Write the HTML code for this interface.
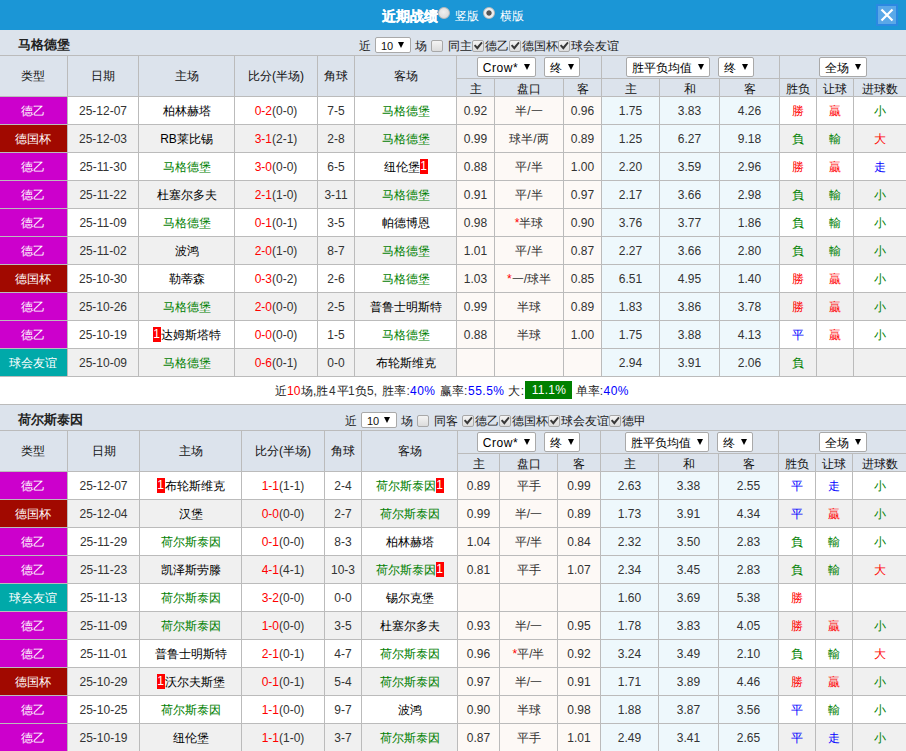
<!DOCTYPE html>
<html><head><meta charset="utf-8"><title>近期战绩</title>
<style>
html,body{margin:0;padding:0;}
body{width:906px;height:751px;overflow:hidden;position:relative;background:#fff;font-family:"Liberation Sans",sans-serif;font-size:12px;color:#1a1a1a;}
.c{position:absolute;box-sizing:border-box;display:flex;align-items:center;justify-content:center;white-space:nowrap;line-height:14px;}
.h{color:#111;}
.ty{color:#fff;padding-right:1.5px;}
.d{color:#333;}
.t{position:absolute;white-space:nowrap;line-height:14px;}
.rc{display:inline-block;background:#f00;color:#fff;font-weight:normal;width:8px;height:15px;line-height:15px;text-align:center;font-size:12px;}
.cb{position:absolute;width:10px;height:10px;border:1px solid #a8a8a8;border-radius:2px;background:linear-gradient(#f4f4f4,#dcdcdc);}
.cb svg{position:absolute;left:-1px;top:-1px;}
.sel{position:absolute;box-sizing:border-box;padding-top:2px;border:1px solid #a9a9a9;border-radius:2px;background:#fff;color:#000;display:flex;align-items:center;justify-content:center;white-space:nowrap;}
.ar{display:inline-block;width:0;height:0;border-left:3px solid transparent;border-right:3px solid transparent;border-top:6px solid #000;margin-left:6px;margin-top:-2px;}
</style></head><body>

<div style="position:absolute;left:0;top:0;width:906px;height:30px;background:#1b96d6"></div>
<div class="t" style="left:382px;top:7.5px;font-weight:bold;font-size:14px;color:#fff;line-height:16px;-webkit-text-stroke:0.3px #fff">近期战绩</div>
<div class="radio" style="position:absolute;left:438px;top:7px;width:10px;height:10px;border-radius:50%;border:1px solid #bbb;background:radial-gradient(circle at 45% 40%,#f0f0f0,#d4d4d4)"></div>
<div class="t" style="left:455px;top:9px;color:#fff;line-height:14px">竖版</div>
<div class="radio" style="position:absolute;left:483px;top:7px;width:10px;height:10px;border-radius:50%;border:1px solid #bbb;background:radial-gradient(circle,#555 0,#555 2.3px,#ccc 2.8px,#eee 3.6px,#f2f2f2 6px)"></div>
<div class="t" style="left:500px;top:9px;color:#fff;line-height:14px">横版</div>
<div style="position:absolute;left:876px;top:4px;width:18px;height:18px;border:2px solid #2b88e2;background:#5aa8e8"></div>
<svg style="position:absolute;left:876px;top:4px" width="22" height="22" viewBox="0 0 22 22"><path d="M5.5 5.5 L16.5 16.5 M16.5 5.5 L5.5 16.5" stroke="#fff" stroke-width="2.2"/></svg>
<div style="position:absolute;left:0;top:30px;width:906px;height:25px;background:#dce3ec"></div>
<div style="position:absolute;left:0;top:55px;width:906px;height:1px;background:#bbbbbb"></div>
<div class="t" style="left:18px;top:37px;font-weight:bold;font-size:13px;color:#222;line-height:15px">马格德堡</div>
<div class="t" style="left:359px;top:39px;line-height:14px">近</div>
<div class="sel" style="left:375px;top:37px;width:36px;height:16px;justify-content:flex-start;padding-left:5px;padding-top:2px;font-size:11px;color:#111">10<i class="ar" style="margin-left:5px;margin-top:-2px"></i></div>
<div class="t" style="left:415px;top:39px;">场</div>
<div class="cb" style="left:431px;top:40px"></div>
<div class="t" style="left:448px;top:39px;">同主</div>
<div class="cb" style="left:472px;top:40px"><svg width="12" height="12" viewBox="0 0 12 12"><path d="M1.9 5.7 L3.3 4.5 L5.2 6.5 L9.3 1.7 L10.7 2.9 L5.4 9.7 Z" fill="#383838"/></svg></div>
<div class="t" style="left:485px;top:39px;">德乙</div>
<div class="cb" style="left:509px;top:40px"><svg width="12" height="12" viewBox="0 0 12 12"><path d="M1.9 5.7 L3.3 4.5 L5.2 6.5 L9.3 1.7 L10.7 2.9 L5.4 9.7 Z" fill="#383838"/></svg></div>
<div class="t" style="left:522px;top:39px;">德国杯</div>
<div class="cb" style="left:558px;top:40px"><svg width="12" height="12" viewBox="0 0 12 12"><path d="M1.9 5.7 L3.3 4.5 L5.2 6.5 L9.3 1.7 L10.7 2.9 L5.4 9.7 Z" fill="#383838"/></svg></div>
<div class="t" style="left:571px;top:39px;">球会友谊</div>
<div class="c h" style="left:0px;top:56px;width:68px;height:41px;background:#dce3ec;border-right:1px solid #bbbbbb;border-bottom:1px solid #bbbbbb;padding-right:1.5px;">类型</div>
<div class="c h" style="left:68px;top:56px;width:71px;height:41px;background:#dce3ec;border-right:1px solid #bbbbbb;border-bottom:1px solid #bbbbbb;">日期</div>
<div class="c h" style="left:139px;top:56px;width:96px;height:41px;background:#dce3ec;border-right:1px solid #bbbbbb;border-bottom:1px solid #bbbbbb;">主场</div>
<div class="c h" style="left:235px;top:56px;width:83px;height:41px;background:#dce3ec;border-right:1px solid #bbbbbb;border-bottom:1px solid #bbbbbb;">比分(半场)</div>
<div class="c h" style="left:318px;top:56px;width:37px;height:41px;background:#dce3ec;border-right:1px solid #bbbbbb;border-bottom:1px solid #bbbbbb;">角球</div>
<div class="c h" style="left:355px;top:56px;width:102px;height:41px;background:#dce3ec;border-right:1px solid #bbbbbb;border-bottom:1px solid #bbbbbb;">客场</div>
<div class="c h" style="left:457px;top:56px;width:145px;height:23px;background:#dce3ec;border-right:1px solid #bbbbbb;border-bottom:1px solid #bbbbbb;"></div>
<div class="c h" style="left:602px;top:56px;width:178px;height:23px;background:#dce3ec;border-right:1px solid #bbbbbb;border-bottom:1px solid #bbbbbb;"></div>
<div class="c h" style="left:780px;top:56px;width:126px;height:23px;background:#dce3ec;border-bottom:1px solid #bbbbbb;"></div>
<div class="c h" style="left:457px;top:79px;width:38px;height:18px;background:#dce3ec;border-right:1px solid #bbbbbb;border-bottom:1px solid #bbbbbb;padding-top:2px;">主</div>
<div class="c h" style="left:495px;top:79px;width:69px;height:18px;background:#dce3ec;border-right:1px solid #bbbbbb;border-bottom:1px solid #bbbbbb;padding-top:2px;">盘口</div>
<div class="c h" style="left:564px;top:79px;width:38px;height:18px;background:#dce3ec;border-right:1px solid #bbbbbb;border-bottom:1px solid #bbbbbb;padding-top:2px;">客</div>
<div class="c h" style="left:602px;top:79px;width:58px;height:18px;background:#dce3ec;border-right:1px solid #bbbbbb;border-bottom:1px solid #bbbbbb;padding-top:2px;">主</div>
<div class="c h" style="left:660px;top:79px;width:60px;height:18px;background:#dce3ec;border-right:1px solid #bbbbbb;border-bottom:1px solid #bbbbbb;padding-top:2px;">和</div>
<div class="c h" style="left:720px;top:79px;width:60px;height:18px;background:#dce3ec;border-right:1px solid #bbbbbb;border-bottom:1px solid #bbbbbb;padding-top:2px;">客</div>
<div class="c h" style="left:780px;top:79px;width:37px;height:18px;background:#dce3ec;border-right:1px solid #bbbbbb;border-bottom:1px solid #bbbbbb;padding-top:2px;">胜负</div>
<div class="c h" style="left:817px;top:79px;width:37px;height:18px;background:#dce3ec;border-right:1px solid #bbbbbb;border-bottom:1px solid #bbbbbb;padding-top:2px;">让球</div>
<div class="c h" style="left:854px;top:79px;width:52px;height:18px;background:#dce3ec;border-bottom:1px solid #bbbbbb;padding-top:2px;">进球数</div>
<div class="sel" style="left:477px;top:57px;width:59px;height:20px"><span style="letter-spacing:0.6px">Crow*</span><i class="ar"></i></div>
<div class="sel" style="left:544px;top:57px;width:36px;height:20px">终<i class="ar"></i></div>
<div class="sel" style="left:626px;top:57px;width:84px;height:20px">胜平负均值<i class="ar"></i></div>
<div class="sel" style="left:718px;top:57px;width:36px;height:20px">终<i class="ar"></i></div>
<div class="sel" style="left:819px;top:57px;width:48px;height:20px">全场<i class="ar"></i></div>
<div class="c ty" style="left:0px;top:97px;width:68px;height:28px;background:#cc00cc;border-right:1px solid #bbbbbb;border-bottom:1px solid #bbbbbb;">德乙</div>
<div class="c d" style="left:68px;top:97px;width:71px;height:28px;background:#ffffff;border-right:1px solid #bbbbbb;border-bottom:1px solid #bbbbbb;">25-12-07</div>
<div class="c" style="left:139px;top:97px;width:96px;height:28px;background:#ffffff;border-right:1px solid #bbbbbb;border-bottom:1px solid #bbbbbb;"><span style="color:#000">柏林赫塔</span></div>
<div class="c d" style="left:235px;top:97px;width:83px;height:28px;background:#ffffff;border-right:1px solid #bbbbbb;border-bottom:1px solid #bbbbbb;"><span style="color:#ff0000">0-2</span>(0-0)</div>
<div class="c d" style="left:318px;top:97px;width:37px;height:28px;background:#ffffff;border-right:1px solid #bbbbbb;border-bottom:1px solid #bbbbbb;">7-5</div>
<div class="c" style="left:355px;top:97px;width:102px;height:28px;background:#ffffff;border-right:1px solid #bbbbbb;border-bottom:1px solid #bbbbbb;"><span style="color:#008000">马格德堡</span></div>
<div class="c d" style="left:457px;top:97px;width:38px;height:28px;background:#fdf9f6;border-right:1px solid #bbbbbb;border-bottom:1px solid #bbbbbb;">0.92</div>
<div class="c d" style="left:495px;top:97px;width:69px;height:28px;background:#fdf9f6;border-right:1px solid #bbbbbb;border-bottom:1px solid #bbbbbb;">半/一</div>
<div class="c d" style="left:564px;top:97px;width:38px;height:28px;background:#fdf9f6;border-right:1px solid #bbbbbb;border-bottom:1px solid #bbbbbb;">0.96</div>
<div class="c d" style="left:602px;top:97px;width:58px;height:28px;background:#eef8fc;border-right:1px solid #bbbbbb;border-bottom:1px solid #bbbbbb;">1.75</div>
<div class="c d" style="left:660px;top:97px;width:60px;height:28px;background:#eef8fc;border-right:1px solid #bbbbbb;border-bottom:1px solid #bbbbbb;">3.83</div>
<div class="c d" style="left:720px;top:97px;width:60px;height:28px;background:#eef8fc;border-right:1px solid #bbbbbb;border-bottom:1px solid #bbbbbb;">4.26</div>
<div class="c" style="left:780px;top:97px;width:37px;height:28px;background:#ffffff;border-right:1px solid #bbbbbb;border-bottom:1px solid #bbbbbb;"><span style="color:#ff0000">勝</span></div>
<div class="c" style="left:817px;top:97px;width:37px;height:28px;background:#ffffff;border-right:1px solid #bbbbbb;border-bottom:1px solid #bbbbbb;"><span style="color:#ff0000">贏</span></div>
<div class="c" style="left:854px;top:97px;width:52px;height:28px;background:#ffffff;border-bottom:1px solid #bbbbbb;"><span style="color:#008000">小</span></div>
<div class="c ty" style="left:0px;top:125px;width:68px;height:28px;background:#a10900;border-right:1px solid #bbbbbb;border-bottom:1px solid #bbbbbb;">德国杯</div>
<div class="c d" style="left:68px;top:125px;width:71px;height:28px;background:#f0f0f0;border-right:1px solid #bbbbbb;border-bottom:1px solid #bbbbbb;">25-12-03</div>
<div class="c" style="left:139px;top:125px;width:96px;height:28px;background:#f0f0f0;border-right:1px solid #bbbbbb;border-bottom:1px solid #bbbbbb;"><span style="color:#000">RB莱比锡</span></div>
<div class="c d" style="left:235px;top:125px;width:83px;height:28px;background:#f0f0f0;border-right:1px solid #bbbbbb;border-bottom:1px solid #bbbbbb;"><span style="color:#ff0000">3-1</span>(2-1)</div>
<div class="c d" style="left:318px;top:125px;width:37px;height:28px;background:#f0f0f0;border-right:1px solid #bbbbbb;border-bottom:1px solid #bbbbbb;">2-8</div>
<div class="c" style="left:355px;top:125px;width:102px;height:28px;background:#f0f0f0;border-right:1px solid #bbbbbb;border-bottom:1px solid #bbbbbb;"><span style="color:#008000">马格德堡</span></div>
<div class="c d" style="left:457px;top:125px;width:38px;height:28px;background:#fdf9f6;border-right:1px solid #bbbbbb;border-bottom:1px solid #bbbbbb;">0.99</div>
<div class="c d" style="left:495px;top:125px;width:69px;height:28px;background:#fdf9f6;border-right:1px solid #bbbbbb;border-bottom:1px solid #bbbbbb;">球半/两</div>
<div class="c d" style="left:564px;top:125px;width:38px;height:28px;background:#fdf9f6;border-right:1px solid #bbbbbb;border-bottom:1px solid #bbbbbb;">0.89</div>
<div class="c d" style="left:602px;top:125px;width:58px;height:28px;background:#eef8fc;border-right:1px solid #bbbbbb;border-bottom:1px solid #bbbbbb;">1.25</div>
<div class="c d" style="left:660px;top:125px;width:60px;height:28px;background:#eef8fc;border-right:1px solid #bbbbbb;border-bottom:1px solid #bbbbbb;">6.27</div>
<div class="c d" style="left:720px;top:125px;width:60px;height:28px;background:#eef8fc;border-right:1px solid #bbbbbb;border-bottom:1px solid #bbbbbb;">9.18</div>
<div class="c" style="left:780px;top:125px;width:37px;height:28px;background:#f0f0f0;border-right:1px solid #bbbbbb;border-bottom:1px solid #bbbbbb;"><span style="color:#008000">負</span></div>
<div class="c" style="left:817px;top:125px;width:37px;height:28px;background:#f0f0f0;border-right:1px solid #bbbbbb;border-bottom:1px solid #bbbbbb;"><span style="color:#008000">輸</span></div>
<div class="c" style="left:854px;top:125px;width:52px;height:28px;background:#f0f0f0;border-bottom:1px solid #bbbbbb;"><span style="color:#ff0000">大</span></div>
<div class="c ty" style="left:0px;top:153px;width:68px;height:28px;background:#cc00cc;border-right:1px solid #bbbbbb;border-bottom:1px solid #bbbbbb;">德乙</div>
<div class="c d" style="left:68px;top:153px;width:71px;height:28px;background:#ffffff;border-right:1px solid #bbbbbb;border-bottom:1px solid #bbbbbb;">25-11-30</div>
<div class="c" style="left:139px;top:153px;width:96px;height:28px;background:#ffffff;border-right:1px solid #bbbbbb;border-bottom:1px solid #bbbbbb;"><span style="color:#008000">马格德堡</span></div>
<div class="c d" style="left:235px;top:153px;width:83px;height:28px;background:#ffffff;border-right:1px solid #bbbbbb;border-bottom:1px solid #bbbbbb;"><span style="color:#ff0000">3-0</span>(0-0)</div>
<div class="c d" style="left:318px;top:153px;width:37px;height:28px;background:#ffffff;border-right:1px solid #bbbbbb;border-bottom:1px solid #bbbbbb;">6-5</div>
<div class="c" style="left:355px;top:153px;width:102px;height:28px;background:#ffffff;border-right:1px solid #bbbbbb;border-bottom:1px solid #bbbbbb;"><span style="color:#000">纽伦堡</span><b class="rc">1</b></div>
<div class="c d" style="left:457px;top:153px;width:38px;height:28px;background:#fdf9f6;border-right:1px solid #bbbbbb;border-bottom:1px solid #bbbbbb;">0.88</div>
<div class="c d" style="left:495px;top:153px;width:69px;height:28px;background:#fdf9f6;border-right:1px solid #bbbbbb;border-bottom:1px solid #bbbbbb;">平/半</div>
<div class="c d" style="left:564px;top:153px;width:38px;height:28px;background:#fdf9f6;border-right:1px solid #bbbbbb;border-bottom:1px solid #bbbbbb;">1.00</div>
<div class="c d" style="left:602px;top:153px;width:58px;height:28px;background:#eef8fc;border-right:1px solid #bbbbbb;border-bottom:1px solid #bbbbbb;">2.20</div>
<div class="c d" style="left:660px;top:153px;width:60px;height:28px;background:#eef8fc;border-right:1px solid #bbbbbb;border-bottom:1px solid #bbbbbb;">3.59</div>
<div class="c d" style="left:720px;top:153px;width:60px;height:28px;background:#eef8fc;border-right:1px solid #bbbbbb;border-bottom:1px solid #bbbbbb;">2.96</div>
<div class="c" style="left:780px;top:153px;width:37px;height:28px;background:#ffffff;border-right:1px solid #bbbbbb;border-bottom:1px solid #bbbbbb;"><span style="color:#ff0000">勝</span></div>
<div class="c" style="left:817px;top:153px;width:37px;height:28px;background:#ffffff;border-right:1px solid #bbbbbb;border-bottom:1px solid #bbbbbb;"><span style="color:#ff0000">贏</span></div>
<div class="c" style="left:854px;top:153px;width:52px;height:28px;background:#ffffff;border-bottom:1px solid #bbbbbb;"><span style="color:#0000ff">走</span></div>
<div class="c ty" style="left:0px;top:181px;width:68px;height:28px;background:#cc00cc;border-right:1px solid #bbbbbb;border-bottom:1px solid #bbbbbb;">德乙</div>
<div class="c d" style="left:68px;top:181px;width:71px;height:28px;background:#f0f0f0;border-right:1px solid #bbbbbb;border-bottom:1px solid #bbbbbb;">25-11-22</div>
<div class="c" style="left:139px;top:181px;width:96px;height:28px;background:#f0f0f0;border-right:1px solid #bbbbbb;border-bottom:1px solid #bbbbbb;"><span style="color:#000">杜塞尔多夫</span></div>
<div class="c d" style="left:235px;top:181px;width:83px;height:28px;background:#f0f0f0;border-right:1px solid #bbbbbb;border-bottom:1px solid #bbbbbb;"><span style="color:#ff0000">2-1</span>(1-0)</div>
<div class="c d" style="left:318px;top:181px;width:37px;height:28px;background:#f0f0f0;border-right:1px solid #bbbbbb;border-bottom:1px solid #bbbbbb;">3-11</div>
<div class="c" style="left:355px;top:181px;width:102px;height:28px;background:#f0f0f0;border-right:1px solid #bbbbbb;border-bottom:1px solid #bbbbbb;"><span style="color:#008000">马格德堡</span></div>
<div class="c d" style="left:457px;top:181px;width:38px;height:28px;background:#fdf9f6;border-right:1px solid #bbbbbb;border-bottom:1px solid #bbbbbb;">0.91</div>
<div class="c d" style="left:495px;top:181px;width:69px;height:28px;background:#fdf9f6;border-right:1px solid #bbbbbb;border-bottom:1px solid #bbbbbb;">平/半</div>
<div class="c d" style="left:564px;top:181px;width:38px;height:28px;background:#fdf9f6;border-right:1px solid #bbbbbb;border-bottom:1px solid #bbbbbb;">0.97</div>
<div class="c d" style="left:602px;top:181px;width:58px;height:28px;background:#eef8fc;border-right:1px solid #bbbbbb;border-bottom:1px solid #bbbbbb;">2.17</div>
<div class="c d" style="left:660px;top:181px;width:60px;height:28px;background:#eef8fc;border-right:1px solid #bbbbbb;border-bottom:1px solid #bbbbbb;">3.66</div>
<div class="c d" style="left:720px;top:181px;width:60px;height:28px;background:#eef8fc;border-right:1px solid #bbbbbb;border-bottom:1px solid #bbbbbb;">2.98</div>
<div class="c" style="left:780px;top:181px;width:37px;height:28px;background:#f0f0f0;border-right:1px solid #bbbbbb;border-bottom:1px solid #bbbbbb;"><span style="color:#008000">負</span></div>
<div class="c" style="left:817px;top:181px;width:37px;height:28px;background:#f0f0f0;border-right:1px solid #bbbbbb;border-bottom:1px solid #bbbbbb;"><span style="color:#008000">輸</span></div>
<div class="c" style="left:854px;top:181px;width:52px;height:28px;background:#f0f0f0;border-bottom:1px solid #bbbbbb;"><span style="color:#008000">小</span></div>
<div class="c ty" style="left:0px;top:209px;width:68px;height:28px;background:#cc00cc;border-right:1px solid #bbbbbb;border-bottom:1px solid #bbbbbb;">德乙</div>
<div class="c d" style="left:68px;top:209px;width:71px;height:28px;background:#ffffff;border-right:1px solid #bbbbbb;border-bottom:1px solid #bbbbbb;">25-11-09</div>
<div class="c" style="left:139px;top:209px;width:96px;height:28px;background:#ffffff;border-right:1px solid #bbbbbb;border-bottom:1px solid #bbbbbb;"><span style="color:#008000">马格德堡</span></div>
<div class="c d" style="left:235px;top:209px;width:83px;height:28px;background:#ffffff;border-right:1px solid #bbbbbb;border-bottom:1px solid #bbbbbb;"><span style="color:#ff0000">0-1</span>(0-1)</div>
<div class="c d" style="left:318px;top:209px;width:37px;height:28px;background:#ffffff;border-right:1px solid #bbbbbb;border-bottom:1px solid #bbbbbb;">3-5</div>
<div class="c" style="left:355px;top:209px;width:102px;height:28px;background:#ffffff;border-right:1px solid #bbbbbb;border-bottom:1px solid #bbbbbb;"><span style="color:#000">帕德博恩</span></div>
<div class="c d" style="left:457px;top:209px;width:38px;height:28px;background:#fdf9f6;border-right:1px solid #bbbbbb;border-bottom:1px solid #bbbbbb;">0.98</div>
<div class="c d" style="left:495px;top:209px;width:69px;height:28px;background:#fdf9f6;border-right:1px solid #bbbbbb;border-bottom:1px solid #bbbbbb;"><span style="color:#f00">*</span>半球</div>
<div class="c d" style="left:564px;top:209px;width:38px;height:28px;background:#fdf9f6;border-right:1px solid #bbbbbb;border-bottom:1px solid #bbbbbb;">0.90</div>
<div class="c d" style="left:602px;top:209px;width:58px;height:28px;background:#eef8fc;border-right:1px solid #bbbbbb;border-bottom:1px solid #bbbbbb;">3.76</div>
<div class="c d" style="left:660px;top:209px;width:60px;height:28px;background:#eef8fc;border-right:1px solid #bbbbbb;border-bottom:1px solid #bbbbbb;">3.77</div>
<div class="c d" style="left:720px;top:209px;width:60px;height:28px;background:#eef8fc;border-right:1px solid #bbbbbb;border-bottom:1px solid #bbbbbb;">1.86</div>
<div class="c" style="left:780px;top:209px;width:37px;height:28px;background:#ffffff;border-right:1px solid #bbbbbb;border-bottom:1px solid #bbbbbb;"><span style="color:#008000">負</span></div>
<div class="c" style="left:817px;top:209px;width:37px;height:28px;background:#ffffff;border-right:1px solid #bbbbbb;border-bottom:1px solid #bbbbbb;"><span style="color:#008000">輸</span></div>
<div class="c" style="left:854px;top:209px;width:52px;height:28px;background:#ffffff;border-bottom:1px solid #bbbbbb;"><span style="color:#008000">小</span></div>
<div class="c ty" style="left:0px;top:237px;width:68px;height:28px;background:#cc00cc;border-right:1px solid #bbbbbb;border-bottom:1px solid #bbbbbb;">德乙</div>
<div class="c d" style="left:68px;top:237px;width:71px;height:28px;background:#f0f0f0;border-right:1px solid #bbbbbb;border-bottom:1px solid #bbbbbb;">25-11-02</div>
<div class="c" style="left:139px;top:237px;width:96px;height:28px;background:#f0f0f0;border-right:1px solid #bbbbbb;border-bottom:1px solid #bbbbbb;"><span style="color:#000">波鸿</span></div>
<div class="c d" style="left:235px;top:237px;width:83px;height:28px;background:#f0f0f0;border-right:1px solid #bbbbbb;border-bottom:1px solid #bbbbbb;"><span style="color:#ff0000">2-0</span>(1-0)</div>
<div class="c d" style="left:318px;top:237px;width:37px;height:28px;background:#f0f0f0;border-right:1px solid #bbbbbb;border-bottom:1px solid #bbbbbb;">8-7</div>
<div class="c" style="left:355px;top:237px;width:102px;height:28px;background:#f0f0f0;border-right:1px solid #bbbbbb;border-bottom:1px solid #bbbbbb;"><span style="color:#008000">马格德堡</span></div>
<div class="c d" style="left:457px;top:237px;width:38px;height:28px;background:#fdf9f6;border-right:1px solid #bbbbbb;border-bottom:1px solid #bbbbbb;">1.01</div>
<div class="c d" style="left:495px;top:237px;width:69px;height:28px;background:#fdf9f6;border-right:1px solid #bbbbbb;border-bottom:1px solid #bbbbbb;">平/半</div>
<div class="c d" style="left:564px;top:237px;width:38px;height:28px;background:#fdf9f6;border-right:1px solid #bbbbbb;border-bottom:1px solid #bbbbbb;">0.87</div>
<div class="c d" style="left:602px;top:237px;width:58px;height:28px;background:#eef8fc;border-right:1px solid #bbbbbb;border-bottom:1px solid #bbbbbb;">2.27</div>
<div class="c d" style="left:660px;top:237px;width:60px;height:28px;background:#eef8fc;border-right:1px solid #bbbbbb;border-bottom:1px solid #bbbbbb;">3.66</div>
<div class="c d" style="left:720px;top:237px;width:60px;height:28px;background:#eef8fc;border-right:1px solid #bbbbbb;border-bottom:1px solid #bbbbbb;">2.80</div>
<div class="c" style="left:780px;top:237px;width:37px;height:28px;background:#f0f0f0;border-right:1px solid #bbbbbb;border-bottom:1px solid #bbbbbb;"><span style="color:#008000">負</span></div>
<div class="c" style="left:817px;top:237px;width:37px;height:28px;background:#f0f0f0;border-right:1px solid #bbbbbb;border-bottom:1px solid #bbbbbb;"><span style="color:#008000">輸</span></div>
<div class="c" style="left:854px;top:237px;width:52px;height:28px;background:#f0f0f0;border-bottom:1px solid #bbbbbb;"><span style="color:#008000">小</span></div>
<div class="c ty" style="left:0px;top:265px;width:68px;height:28px;background:#a10900;border-right:1px solid #bbbbbb;border-bottom:1px solid #bbbbbb;">德国杯</div>
<div class="c d" style="left:68px;top:265px;width:71px;height:28px;background:#ffffff;border-right:1px solid #bbbbbb;border-bottom:1px solid #bbbbbb;">25-10-30</div>
<div class="c" style="left:139px;top:265px;width:96px;height:28px;background:#ffffff;border-right:1px solid #bbbbbb;border-bottom:1px solid #bbbbbb;"><span style="color:#000">勒蒂森</span></div>
<div class="c d" style="left:235px;top:265px;width:83px;height:28px;background:#ffffff;border-right:1px solid #bbbbbb;border-bottom:1px solid #bbbbbb;"><span style="color:#ff0000">0-3</span>(0-2)</div>
<div class="c d" style="left:318px;top:265px;width:37px;height:28px;background:#ffffff;border-right:1px solid #bbbbbb;border-bottom:1px solid #bbbbbb;">2-6</div>
<div class="c" style="left:355px;top:265px;width:102px;height:28px;background:#ffffff;border-right:1px solid #bbbbbb;border-bottom:1px solid #bbbbbb;"><span style="color:#008000">马格德堡</span></div>
<div class="c d" style="left:457px;top:265px;width:38px;height:28px;background:#fdf9f6;border-right:1px solid #bbbbbb;border-bottom:1px solid #bbbbbb;">1.03</div>
<div class="c d" style="left:495px;top:265px;width:69px;height:28px;background:#fdf9f6;border-right:1px solid #bbbbbb;border-bottom:1px solid #bbbbbb;"><span style="color:#f00">*</span>一/球半</div>
<div class="c d" style="left:564px;top:265px;width:38px;height:28px;background:#fdf9f6;border-right:1px solid #bbbbbb;border-bottom:1px solid #bbbbbb;">0.85</div>
<div class="c d" style="left:602px;top:265px;width:58px;height:28px;background:#eef8fc;border-right:1px solid #bbbbbb;border-bottom:1px solid #bbbbbb;">6.51</div>
<div class="c d" style="left:660px;top:265px;width:60px;height:28px;background:#eef8fc;border-right:1px solid #bbbbbb;border-bottom:1px solid #bbbbbb;">4.95</div>
<div class="c d" style="left:720px;top:265px;width:60px;height:28px;background:#eef8fc;border-right:1px solid #bbbbbb;border-bottom:1px solid #bbbbbb;">1.40</div>
<div class="c" style="left:780px;top:265px;width:37px;height:28px;background:#ffffff;border-right:1px solid #bbbbbb;border-bottom:1px solid #bbbbbb;"><span style="color:#ff0000">勝</span></div>
<div class="c" style="left:817px;top:265px;width:37px;height:28px;background:#ffffff;border-right:1px solid #bbbbbb;border-bottom:1px solid #bbbbbb;"><span style="color:#ff0000">贏</span></div>
<div class="c" style="left:854px;top:265px;width:52px;height:28px;background:#ffffff;border-bottom:1px solid #bbbbbb;"><span style="color:#008000">小</span></div>
<div class="c ty" style="left:0px;top:293px;width:68px;height:28px;background:#cc00cc;border-right:1px solid #bbbbbb;border-bottom:1px solid #bbbbbb;">德乙</div>
<div class="c d" style="left:68px;top:293px;width:71px;height:28px;background:#f0f0f0;border-right:1px solid #bbbbbb;border-bottom:1px solid #bbbbbb;">25-10-26</div>
<div class="c" style="left:139px;top:293px;width:96px;height:28px;background:#f0f0f0;border-right:1px solid #bbbbbb;border-bottom:1px solid #bbbbbb;"><span style="color:#008000">马格德堡</span></div>
<div class="c d" style="left:235px;top:293px;width:83px;height:28px;background:#f0f0f0;border-right:1px solid #bbbbbb;border-bottom:1px solid #bbbbbb;"><span style="color:#ff0000">2-0</span>(0-0)</div>
<div class="c d" style="left:318px;top:293px;width:37px;height:28px;background:#f0f0f0;border-right:1px solid #bbbbbb;border-bottom:1px solid #bbbbbb;">2-5</div>
<div class="c" style="left:355px;top:293px;width:102px;height:28px;background:#f0f0f0;border-right:1px solid #bbbbbb;border-bottom:1px solid #bbbbbb;"><span style="color:#000">普鲁士明斯特</span></div>
<div class="c d" style="left:457px;top:293px;width:38px;height:28px;background:#fdf9f6;border-right:1px solid #bbbbbb;border-bottom:1px solid #bbbbbb;">0.99</div>
<div class="c d" style="left:495px;top:293px;width:69px;height:28px;background:#fdf9f6;border-right:1px solid #bbbbbb;border-bottom:1px solid #bbbbbb;">半球</div>
<div class="c d" style="left:564px;top:293px;width:38px;height:28px;background:#fdf9f6;border-right:1px solid #bbbbbb;border-bottom:1px solid #bbbbbb;">0.89</div>
<div class="c d" style="left:602px;top:293px;width:58px;height:28px;background:#eef8fc;border-right:1px solid #bbbbbb;border-bottom:1px solid #bbbbbb;">1.83</div>
<div class="c d" style="left:660px;top:293px;width:60px;height:28px;background:#eef8fc;border-right:1px solid #bbbbbb;border-bottom:1px solid #bbbbbb;">3.86</div>
<div class="c d" style="left:720px;top:293px;width:60px;height:28px;background:#eef8fc;border-right:1px solid #bbbbbb;border-bottom:1px solid #bbbbbb;">3.78</div>
<div class="c" style="left:780px;top:293px;width:37px;height:28px;background:#f0f0f0;border-right:1px solid #bbbbbb;border-bottom:1px solid #bbbbbb;"><span style="color:#ff0000">勝</span></div>
<div class="c" style="left:817px;top:293px;width:37px;height:28px;background:#f0f0f0;border-right:1px solid #bbbbbb;border-bottom:1px solid #bbbbbb;"><span style="color:#ff0000">贏</span></div>
<div class="c" style="left:854px;top:293px;width:52px;height:28px;background:#f0f0f0;border-bottom:1px solid #bbbbbb;"><span style="color:#008000">小</span></div>
<div class="c ty" style="left:0px;top:321px;width:68px;height:28px;background:#cc00cc;border-right:1px solid #bbbbbb;border-bottom:1px solid #bbbbbb;">德乙</div>
<div class="c d" style="left:68px;top:321px;width:71px;height:28px;background:#ffffff;border-right:1px solid #bbbbbb;border-bottom:1px solid #bbbbbb;">25-10-19</div>
<div class="c" style="left:139px;top:321px;width:96px;height:28px;background:#ffffff;border-right:1px solid #bbbbbb;border-bottom:1px solid #bbbbbb;"><b class="rc">1</b><span style="color:#000">达姆斯塔特</span></div>
<div class="c d" style="left:235px;top:321px;width:83px;height:28px;background:#ffffff;border-right:1px solid #bbbbbb;border-bottom:1px solid #bbbbbb;"><span style="color:#ff0000">0-0</span>(0-0)</div>
<div class="c d" style="left:318px;top:321px;width:37px;height:28px;background:#ffffff;border-right:1px solid #bbbbbb;border-bottom:1px solid #bbbbbb;">1-5</div>
<div class="c" style="left:355px;top:321px;width:102px;height:28px;background:#ffffff;border-right:1px solid #bbbbbb;border-bottom:1px solid #bbbbbb;"><span style="color:#008000">马格德堡</span></div>
<div class="c d" style="left:457px;top:321px;width:38px;height:28px;background:#fdf9f6;border-right:1px solid #bbbbbb;border-bottom:1px solid #bbbbbb;">0.88</div>
<div class="c d" style="left:495px;top:321px;width:69px;height:28px;background:#fdf9f6;border-right:1px solid #bbbbbb;border-bottom:1px solid #bbbbbb;">半球</div>
<div class="c d" style="left:564px;top:321px;width:38px;height:28px;background:#fdf9f6;border-right:1px solid #bbbbbb;border-bottom:1px solid #bbbbbb;">1.00</div>
<div class="c d" style="left:602px;top:321px;width:58px;height:28px;background:#eef8fc;border-right:1px solid #bbbbbb;border-bottom:1px solid #bbbbbb;">1.75</div>
<div class="c d" style="left:660px;top:321px;width:60px;height:28px;background:#eef8fc;border-right:1px solid #bbbbbb;border-bottom:1px solid #bbbbbb;">3.88</div>
<div class="c d" style="left:720px;top:321px;width:60px;height:28px;background:#eef8fc;border-right:1px solid #bbbbbb;border-bottom:1px solid #bbbbbb;">4.13</div>
<div class="c" style="left:780px;top:321px;width:37px;height:28px;background:#ffffff;border-right:1px solid #bbbbbb;border-bottom:1px solid #bbbbbb;"><span style="color:#0000ff">平</span></div>
<div class="c" style="left:817px;top:321px;width:37px;height:28px;background:#ffffff;border-right:1px solid #bbbbbb;border-bottom:1px solid #bbbbbb;"><span style="color:#ff0000">贏</span></div>
<div class="c" style="left:854px;top:321px;width:52px;height:28px;background:#ffffff;border-bottom:1px solid #bbbbbb;"><span style="color:#008000">小</span></div>
<div class="c ty" style="left:0px;top:349px;width:68px;height:28px;background:#00a9a9;border-right:1px solid #bbbbbb;border-bottom:1px solid #bbbbbb;">球会友谊</div>
<div class="c d" style="left:68px;top:349px;width:71px;height:28px;background:#f0f0f0;border-right:1px solid #bbbbbb;border-bottom:1px solid #bbbbbb;">25-10-09</div>
<div class="c" style="left:139px;top:349px;width:96px;height:28px;background:#f0f0f0;border-right:1px solid #bbbbbb;border-bottom:1px solid #bbbbbb;"><span style="color:#008000">马格德堡</span></div>
<div class="c d" style="left:235px;top:349px;width:83px;height:28px;background:#f0f0f0;border-right:1px solid #bbbbbb;border-bottom:1px solid #bbbbbb;"><span style="color:#ff0000">0-6</span>(0-1)</div>
<div class="c d" style="left:318px;top:349px;width:37px;height:28px;background:#f0f0f0;border-right:1px solid #bbbbbb;border-bottom:1px solid #bbbbbb;">0-0</div>
<div class="c" style="left:355px;top:349px;width:102px;height:28px;background:#f0f0f0;border-right:1px solid #bbbbbb;border-bottom:1px solid #bbbbbb;"><span style="color:#000">布轮斯维克</span></div>
<div class="c d" style="left:457px;top:349px;width:38px;height:28px;background:#fdf9f6;border-right:1px solid #bbbbbb;border-bottom:1px solid #bbbbbb;"></div>
<div class="c d" style="left:495px;top:349px;width:69px;height:28px;background:#fdf9f6;border-right:1px solid #bbbbbb;border-bottom:1px solid #bbbbbb;"></div>
<div class="c d" style="left:564px;top:349px;width:38px;height:28px;background:#fdf9f6;border-right:1px solid #bbbbbb;border-bottom:1px solid #bbbbbb;"></div>
<div class="c d" style="left:602px;top:349px;width:58px;height:28px;background:#eef8fc;border-right:1px solid #bbbbbb;border-bottom:1px solid #bbbbbb;">2.94</div>
<div class="c d" style="left:660px;top:349px;width:60px;height:28px;background:#eef8fc;border-right:1px solid #bbbbbb;border-bottom:1px solid #bbbbbb;">3.91</div>
<div class="c d" style="left:720px;top:349px;width:60px;height:28px;background:#eef8fc;border-right:1px solid #bbbbbb;border-bottom:1px solid #bbbbbb;">2.06</div>
<div class="c" style="left:780px;top:349px;width:37px;height:28px;background:#f0f0f0;border-right:1px solid #bbbbbb;border-bottom:1px solid #bbbbbb;"><span style="color:#008000">負</span></div>
<div class="c" style="left:817px;top:349px;width:37px;height:28px;background:#f0f0f0;border-right:1px solid #bbbbbb;border-bottom:1px solid #bbbbbb;"><span style="color:#333333"></span></div>
<div class="c" style="left:854px;top:349px;width:52px;height:28px;background:#f0f0f0;border-bottom:1px solid #bbbbbb;"><span style="color:#333333"></span></div>
<div style="position:absolute;left:0;top:377px;width:906px;height:27px;border-bottom:1px solid #bbb;box-sizing:border-box;height:28px;background:#fff"></div>
<div class="t" style="left:275px;top:383px;line-height:16px;color:#1a1a1a;">近</div>
<div class="t" style="left:287px;top:383px;line-height:16px;color:#f00;">10</div>
<div class="t" style="left:301px;top:383px;line-height:16px;color:#1a1a1a;">场,胜</div>
<div class="t" style="left:329px;top:383px;line-height:16px;color:#333;">4</div>
<div class="t" style="left:337px;top:383px;line-height:16px;color:#1a1a1a;">平</div>
<div class="t" style="left:348px;top:383px;line-height:16px;color:#333;">1</div>
<div class="t" style="left:355px;top:383px;line-height:16px;color:#1a1a1a;">负</div>
<div class="t" style="left:367px;top:383px;line-height:16px;color:#333;">5,</div>
<div class="t" style="left:382px;top:383px;line-height:16px;color:#1a1a1a;">胜率</div>
<div class="t" style="left:406.5px;top:383px;line-height:16px;color:#333;">:</div>
<div class="t" style="left:410px;top:383px;line-height:16px;color:#00f;letter-spacing:0.5px;">40%</div>
<div class="t" style="left:440px;top:383px;line-height:16px;color:#1a1a1a;">赢率</div>
<div class="t" style="left:464px;top:383px;line-height:16px;color:#333;">:</div>
<div class="t" style="left:468px;top:383px;line-height:16px;color:#00f;letter-spacing:0.5px;">55.5%</div>
<div class="t" style="left:507.6px;top:383px;line-height:16px;color:#1a1a1a;">大</div>
<div class="t" style="left:520.8px;top:383px;line-height:16px;color:#333;">:</div>
<div class="t" style="left:576px;top:383px;line-height:16px;color:#1a1a1a;">单率</div>
<div class="t" style="left:599.8px;top:383px;line-height:16px;color:#333;">:</div>
<div class="t" style="left:603.5px;top:383px;line-height:16px;color:#00f;letter-spacing:0.5px;">40%</div>
<div class="c" style="left:525px;top:381px;width:47px;height:18px;background:#008000;color:#fff;letter-spacing:0.3px;padding-left:1px">11.1%</div>
<div style="position:absolute;left:0;top:405px;width:906px;height:25px;background:#dce3ec"></div>
<div style="position:absolute;left:0;top:430px;width:906px;height:1px;background:#bbbbbb"></div>
<div class="t" style="left:18px;top:412px;font-weight:bold;font-size:13px;color:#222;line-height:15px">荷尔斯泰因</div>
<div class="t" style="left:345px;top:414px;">近</div>
<div class="sel" style="left:361px;top:412px;width:36px;height:16px;justify-content:flex-start;padding-left:5px;padding-top:2px;font-size:11px;color:#111">10<i class="ar" style="margin-left:5px;margin-top:-2px"></i></div>
<div class="t" style="left:401px;top:414px;">场</div>
<div class="cb" style="left:417px;top:415px"></div>
<div class="t" style="left:434px;top:414px;">同客</div>
<div class="cb" style="left:462px;top:415px"><svg width="12" height="12" viewBox="0 0 12 12"><path d="M1.9 5.7 L3.3 4.5 L5.2 6.5 L9.3 1.7 L10.7 2.9 L5.4 9.7 Z" fill="#383838"/></svg></div>
<div class="t" style="left:475px;top:414px;">德乙</div>
<div class="cb" style="left:499px;top:415px"><svg width="12" height="12" viewBox="0 0 12 12"><path d="M1.9 5.7 L3.3 4.5 L5.2 6.5 L9.3 1.7 L10.7 2.9 L5.4 9.7 Z" fill="#383838"/></svg></div>
<div class="t" style="left:512px;top:414px;">德国杯</div>
<div class="cb" style="left:548px;top:415px"><svg width="12" height="12" viewBox="0 0 12 12"><path d="M1.9 5.7 L3.3 4.5 L5.2 6.5 L9.3 1.7 L10.7 2.9 L5.4 9.7 Z" fill="#383838"/></svg></div>
<div class="t" style="left:561px;top:414px;">球会友谊</div>
<div class="cb" style="left:609px;top:415px"><svg width="12" height="12" viewBox="0 0 12 12"><path d="M1.9 5.7 L3.3 4.5 L5.2 6.5 L9.3 1.7 L10.7 2.9 L5.4 9.7 Z" fill="#383838"/></svg></div>
<div class="t" style="left:622px;top:414px;">德甲</div>
<div class="c h" style="left:0px;top:431px;width:68px;height:41px;background:#dce3ec;border-right:1px solid #bbbbbb;border-bottom:1px solid #bbbbbb;padding-right:1.5px;">类型</div>
<div class="c h" style="left:68px;top:431px;width:72px;height:41px;background:#dce3ec;border-right:1px solid #bbbbbb;border-bottom:1px solid #bbbbbb;">日期</div>
<div class="c h" style="left:140px;top:431px;width:102px;height:41px;background:#dce3ec;border-right:1px solid #bbbbbb;border-bottom:1px solid #bbbbbb;">主场</div>
<div class="c h" style="left:242px;top:431px;width:83px;height:41px;background:#dce3ec;border-right:1px solid #bbbbbb;border-bottom:1px solid #bbbbbb;">比分(半场)</div>
<div class="c h" style="left:325px;top:431px;width:37px;height:41px;background:#dce3ec;border-right:1px solid #bbbbbb;border-bottom:1px solid #bbbbbb;">角球</div>
<div class="c h" style="left:362px;top:431px;width:96px;height:41px;background:#dce3ec;border-right:1px solid #bbbbbb;border-bottom:1px solid #bbbbbb;">客场</div>
<div class="c h" style="left:458px;top:431px;width:143px;height:23px;background:#dce3ec;border-right:1px solid #bbbbbb;border-bottom:1px solid #bbbbbb;"></div>
<div class="c h" style="left:601px;top:431px;width:178px;height:23px;background:#dce3ec;border-right:1px solid #bbbbbb;border-bottom:1px solid #bbbbbb;"></div>
<div class="c h" style="left:779px;top:431px;width:127px;height:23px;background:#dce3ec;border-bottom:1px solid #bbbbbb;"></div>
<div class="c h" style="left:458px;top:454px;width:42px;height:18px;background:#dce3ec;border-right:1px solid #bbbbbb;border-bottom:1px solid #bbbbbb;padding-top:2px;">主</div>
<div class="c h" style="left:500px;top:454px;width:58px;height:18px;background:#dce3ec;border-right:1px solid #bbbbbb;border-bottom:1px solid #bbbbbb;padding-top:2px;">盘口</div>
<div class="c h" style="left:558px;top:454px;width:43px;height:18px;background:#dce3ec;border-right:1px solid #bbbbbb;border-bottom:1px solid #bbbbbb;padding-top:2px;">客</div>
<div class="c h" style="left:601px;top:454px;width:58px;height:18px;background:#dce3ec;border-right:1px solid #bbbbbb;border-bottom:1px solid #bbbbbb;padding-top:2px;">主</div>
<div class="c h" style="left:659px;top:454px;width:60px;height:18px;background:#dce3ec;border-right:1px solid #bbbbbb;border-bottom:1px solid #bbbbbb;padding-top:2px;">和</div>
<div class="c h" style="left:719px;top:454px;width:60px;height:18px;background:#dce3ec;border-right:1px solid #bbbbbb;border-bottom:1px solid #bbbbbb;padding-top:2px;">客</div>
<div class="c h" style="left:779px;top:454px;width:37px;height:18px;background:#dce3ec;border-right:1px solid #bbbbbb;border-bottom:1px solid #bbbbbb;padding-top:2px;">胜负</div>
<div class="c h" style="left:816px;top:454px;width:37px;height:18px;background:#dce3ec;border-right:1px solid #bbbbbb;border-bottom:1px solid #bbbbbb;padding-top:2px;">让球</div>
<div class="c h" style="left:853px;top:454px;width:53px;height:18px;background:#dce3ec;border-bottom:1px solid #bbbbbb;padding-top:2px;">进球数</div>
<div class="sel" style="left:477px;top:432px;width:59px;height:20px"><span style="letter-spacing:0.6px">Crow*</span><i class="ar"></i></div>
<div class="sel" style="left:544px;top:432px;width:36px;height:20px">终<i class="ar"></i></div>
<div class="sel" style="left:625px;top:432px;width:84px;height:20px">胜平负均值<i class="ar"></i></div>
<div class="sel" style="left:717px;top:432px;width:36px;height:20px">终<i class="ar"></i></div>
<div class="sel" style="left:819px;top:432px;width:48px;height:20px">全场<i class="ar"></i></div>
<div class="c ty" style="left:0px;top:472px;width:68px;height:28px;background:#cc00cc;border-right:1px solid #bbbbbb;border-bottom:1px solid #bbbbbb;">德乙</div>
<div class="c d" style="left:68px;top:472px;width:72px;height:28px;background:#ffffff;border-right:1px solid #bbbbbb;border-bottom:1px solid #bbbbbb;">25-12-07</div>
<div class="c" style="left:140px;top:472px;width:102px;height:28px;background:#ffffff;border-right:1px solid #bbbbbb;border-bottom:1px solid #bbbbbb;"><b class="rc">1</b><span style="color:#000">布轮斯维克</span></div>
<div class="c d" style="left:242px;top:472px;width:83px;height:28px;background:#ffffff;border-right:1px solid #bbbbbb;border-bottom:1px solid #bbbbbb;"><span style="color:#ff0000">1-1</span>(1-1)</div>
<div class="c d" style="left:325px;top:472px;width:37px;height:28px;background:#ffffff;border-right:1px solid #bbbbbb;border-bottom:1px solid #bbbbbb;">2-4</div>
<div class="c" style="left:362px;top:472px;width:96px;height:28px;background:#ffffff;border-right:1px solid #bbbbbb;border-bottom:1px solid #bbbbbb;"><span style="color:#008000">荷尔斯泰因</span><b class="rc">1</b></div>
<div class="c d" style="left:458px;top:472px;width:42px;height:28px;background:#fdf9f6;border-right:1px solid #bbbbbb;border-bottom:1px solid #bbbbbb;">0.89</div>
<div class="c d" style="left:500px;top:472px;width:58px;height:28px;background:#fdf9f6;border-right:1px solid #bbbbbb;border-bottom:1px solid #bbbbbb;">平手</div>
<div class="c d" style="left:558px;top:472px;width:43px;height:28px;background:#fdf9f6;border-right:1px solid #bbbbbb;border-bottom:1px solid #bbbbbb;">0.99</div>
<div class="c d" style="left:601px;top:472px;width:58px;height:28px;background:#eef8fc;border-right:1px solid #bbbbbb;border-bottom:1px solid #bbbbbb;">2.63</div>
<div class="c d" style="left:659px;top:472px;width:60px;height:28px;background:#eef8fc;border-right:1px solid #bbbbbb;border-bottom:1px solid #bbbbbb;">3.38</div>
<div class="c d" style="left:719px;top:472px;width:60px;height:28px;background:#eef8fc;border-right:1px solid #bbbbbb;border-bottom:1px solid #bbbbbb;">2.55</div>
<div class="c" style="left:779px;top:472px;width:37px;height:28px;background:#ffffff;border-right:1px solid #bbbbbb;border-bottom:1px solid #bbbbbb;"><span style="color:#0000ff">平</span></div>
<div class="c" style="left:816px;top:472px;width:37px;height:28px;background:#ffffff;border-right:1px solid #bbbbbb;border-bottom:1px solid #bbbbbb;"><span style="color:#0000ff">走</span></div>
<div class="c" style="left:853px;top:472px;width:53px;height:28px;background:#ffffff;border-bottom:1px solid #bbbbbb;"><span style="color:#008000">小</span></div>
<div class="c ty" style="left:0px;top:500px;width:68px;height:28px;background:#a10900;border-right:1px solid #bbbbbb;border-bottom:1px solid #bbbbbb;">德国杯</div>
<div class="c d" style="left:68px;top:500px;width:72px;height:28px;background:#f0f0f0;border-right:1px solid #bbbbbb;border-bottom:1px solid #bbbbbb;">25-12-04</div>
<div class="c" style="left:140px;top:500px;width:102px;height:28px;background:#f0f0f0;border-right:1px solid #bbbbbb;border-bottom:1px solid #bbbbbb;"><span style="color:#000">汉堡</span></div>
<div class="c d" style="left:242px;top:500px;width:83px;height:28px;background:#f0f0f0;border-right:1px solid #bbbbbb;border-bottom:1px solid #bbbbbb;"><span style="color:#ff0000">0-0</span>(0-0)</div>
<div class="c d" style="left:325px;top:500px;width:37px;height:28px;background:#f0f0f0;border-right:1px solid #bbbbbb;border-bottom:1px solid #bbbbbb;">2-7</div>
<div class="c" style="left:362px;top:500px;width:96px;height:28px;background:#f0f0f0;border-right:1px solid #bbbbbb;border-bottom:1px solid #bbbbbb;"><span style="color:#008000">荷尔斯泰因</span></div>
<div class="c d" style="left:458px;top:500px;width:42px;height:28px;background:#fdf9f6;border-right:1px solid #bbbbbb;border-bottom:1px solid #bbbbbb;">0.99</div>
<div class="c d" style="left:500px;top:500px;width:58px;height:28px;background:#fdf9f6;border-right:1px solid #bbbbbb;border-bottom:1px solid #bbbbbb;">半/一</div>
<div class="c d" style="left:558px;top:500px;width:43px;height:28px;background:#fdf9f6;border-right:1px solid #bbbbbb;border-bottom:1px solid #bbbbbb;">0.89</div>
<div class="c d" style="left:601px;top:500px;width:58px;height:28px;background:#eef8fc;border-right:1px solid #bbbbbb;border-bottom:1px solid #bbbbbb;">1.73</div>
<div class="c d" style="left:659px;top:500px;width:60px;height:28px;background:#eef8fc;border-right:1px solid #bbbbbb;border-bottom:1px solid #bbbbbb;">3.91</div>
<div class="c d" style="left:719px;top:500px;width:60px;height:28px;background:#eef8fc;border-right:1px solid #bbbbbb;border-bottom:1px solid #bbbbbb;">4.34</div>
<div class="c" style="left:779px;top:500px;width:37px;height:28px;background:#f0f0f0;border-right:1px solid #bbbbbb;border-bottom:1px solid #bbbbbb;"><span style="color:#0000ff">平</span></div>
<div class="c" style="left:816px;top:500px;width:37px;height:28px;background:#f0f0f0;border-right:1px solid #bbbbbb;border-bottom:1px solid #bbbbbb;"><span style="color:#ff0000">贏</span></div>
<div class="c" style="left:853px;top:500px;width:53px;height:28px;background:#f0f0f0;border-bottom:1px solid #bbbbbb;"><span style="color:#008000">小</span></div>
<div class="c ty" style="left:0px;top:528px;width:68px;height:28px;background:#cc00cc;border-right:1px solid #bbbbbb;border-bottom:1px solid #bbbbbb;">德乙</div>
<div class="c d" style="left:68px;top:528px;width:72px;height:28px;background:#ffffff;border-right:1px solid #bbbbbb;border-bottom:1px solid #bbbbbb;">25-11-29</div>
<div class="c" style="left:140px;top:528px;width:102px;height:28px;background:#ffffff;border-right:1px solid #bbbbbb;border-bottom:1px solid #bbbbbb;"><span style="color:#008000">荷尔斯泰因</span></div>
<div class="c d" style="left:242px;top:528px;width:83px;height:28px;background:#ffffff;border-right:1px solid #bbbbbb;border-bottom:1px solid #bbbbbb;"><span style="color:#ff0000">0-1</span>(0-0)</div>
<div class="c d" style="left:325px;top:528px;width:37px;height:28px;background:#ffffff;border-right:1px solid #bbbbbb;border-bottom:1px solid #bbbbbb;">8-3</div>
<div class="c" style="left:362px;top:528px;width:96px;height:28px;background:#ffffff;border-right:1px solid #bbbbbb;border-bottom:1px solid #bbbbbb;"><span style="color:#000">柏林赫塔</span></div>
<div class="c d" style="left:458px;top:528px;width:42px;height:28px;background:#fdf9f6;border-right:1px solid #bbbbbb;border-bottom:1px solid #bbbbbb;">1.04</div>
<div class="c d" style="left:500px;top:528px;width:58px;height:28px;background:#fdf9f6;border-right:1px solid #bbbbbb;border-bottom:1px solid #bbbbbb;">平/半</div>
<div class="c d" style="left:558px;top:528px;width:43px;height:28px;background:#fdf9f6;border-right:1px solid #bbbbbb;border-bottom:1px solid #bbbbbb;">0.84</div>
<div class="c d" style="left:601px;top:528px;width:58px;height:28px;background:#eef8fc;border-right:1px solid #bbbbbb;border-bottom:1px solid #bbbbbb;">2.32</div>
<div class="c d" style="left:659px;top:528px;width:60px;height:28px;background:#eef8fc;border-right:1px solid #bbbbbb;border-bottom:1px solid #bbbbbb;">3.50</div>
<div class="c d" style="left:719px;top:528px;width:60px;height:28px;background:#eef8fc;border-right:1px solid #bbbbbb;border-bottom:1px solid #bbbbbb;">2.83</div>
<div class="c" style="left:779px;top:528px;width:37px;height:28px;background:#ffffff;border-right:1px solid #bbbbbb;border-bottom:1px solid #bbbbbb;"><span style="color:#008000">負</span></div>
<div class="c" style="left:816px;top:528px;width:37px;height:28px;background:#ffffff;border-right:1px solid #bbbbbb;border-bottom:1px solid #bbbbbb;"><span style="color:#008000">輸</span></div>
<div class="c" style="left:853px;top:528px;width:53px;height:28px;background:#ffffff;border-bottom:1px solid #bbbbbb;"><span style="color:#008000">小</span></div>
<div class="c ty" style="left:0px;top:556px;width:68px;height:28px;background:#cc00cc;border-right:1px solid #bbbbbb;border-bottom:1px solid #bbbbbb;">德乙</div>
<div class="c d" style="left:68px;top:556px;width:72px;height:28px;background:#f0f0f0;border-right:1px solid #bbbbbb;border-bottom:1px solid #bbbbbb;">25-11-23</div>
<div class="c" style="left:140px;top:556px;width:102px;height:28px;background:#f0f0f0;border-right:1px solid #bbbbbb;border-bottom:1px solid #bbbbbb;"><span style="color:#000">凯泽斯劳滕</span></div>
<div class="c d" style="left:242px;top:556px;width:83px;height:28px;background:#f0f0f0;border-right:1px solid #bbbbbb;border-bottom:1px solid #bbbbbb;"><span style="color:#ff0000">4-1</span>(4-1)</div>
<div class="c d" style="left:325px;top:556px;width:37px;height:28px;background:#f0f0f0;border-right:1px solid #bbbbbb;border-bottom:1px solid #bbbbbb;">10-3</div>
<div class="c" style="left:362px;top:556px;width:96px;height:28px;background:#f0f0f0;border-right:1px solid #bbbbbb;border-bottom:1px solid #bbbbbb;"><span style="color:#008000">荷尔斯泰因</span><b class="rc">1</b></div>
<div class="c d" style="left:458px;top:556px;width:42px;height:28px;background:#fdf9f6;border-right:1px solid #bbbbbb;border-bottom:1px solid #bbbbbb;">0.81</div>
<div class="c d" style="left:500px;top:556px;width:58px;height:28px;background:#fdf9f6;border-right:1px solid #bbbbbb;border-bottom:1px solid #bbbbbb;">平手</div>
<div class="c d" style="left:558px;top:556px;width:43px;height:28px;background:#fdf9f6;border-right:1px solid #bbbbbb;border-bottom:1px solid #bbbbbb;">1.07</div>
<div class="c d" style="left:601px;top:556px;width:58px;height:28px;background:#eef8fc;border-right:1px solid #bbbbbb;border-bottom:1px solid #bbbbbb;">2.34</div>
<div class="c d" style="left:659px;top:556px;width:60px;height:28px;background:#eef8fc;border-right:1px solid #bbbbbb;border-bottom:1px solid #bbbbbb;">3.45</div>
<div class="c d" style="left:719px;top:556px;width:60px;height:28px;background:#eef8fc;border-right:1px solid #bbbbbb;border-bottom:1px solid #bbbbbb;">2.83</div>
<div class="c" style="left:779px;top:556px;width:37px;height:28px;background:#f0f0f0;border-right:1px solid #bbbbbb;border-bottom:1px solid #bbbbbb;"><span style="color:#008000">負</span></div>
<div class="c" style="left:816px;top:556px;width:37px;height:28px;background:#f0f0f0;border-right:1px solid #bbbbbb;border-bottom:1px solid #bbbbbb;"><span style="color:#008000">輸</span></div>
<div class="c" style="left:853px;top:556px;width:53px;height:28px;background:#f0f0f0;border-bottom:1px solid #bbbbbb;"><span style="color:#ff0000">大</span></div>
<div class="c ty" style="left:0px;top:584px;width:68px;height:28px;background:#00a9a9;border-right:1px solid #bbbbbb;border-bottom:1px solid #bbbbbb;">球会友谊</div>
<div class="c d" style="left:68px;top:584px;width:72px;height:28px;background:#ffffff;border-right:1px solid #bbbbbb;border-bottom:1px solid #bbbbbb;">25-11-13</div>
<div class="c" style="left:140px;top:584px;width:102px;height:28px;background:#ffffff;border-right:1px solid #bbbbbb;border-bottom:1px solid #bbbbbb;"><span style="color:#008000">荷尔斯泰因</span></div>
<div class="c d" style="left:242px;top:584px;width:83px;height:28px;background:#ffffff;border-right:1px solid #bbbbbb;border-bottom:1px solid #bbbbbb;"><span style="color:#ff0000">3-2</span>(0-0)</div>
<div class="c d" style="left:325px;top:584px;width:37px;height:28px;background:#ffffff;border-right:1px solid #bbbbbb;border-bottom:1px solid #bbbbbb;">0-0</div>
<div class="c" style="left:362px;top:584px;width:96px;height:28px;background:#ffffff;border-right:1px solid #bbbbbb;border-bottom:1px solid #bbbbbb;"><span style="color:#000">锡尔克堡</span></div>
<div class="c d" style="left:458px;top:584px;width:42px;height:28px;background:#fdf9f6;border-right:1px solid #bbbbbb;border-bottom:1px solid #bbbbbb;"></div>
<div class="c d" style="left:500px;top:584px;width:58px;height:28px;background:#fdf9f6;border-right:1px solid #bbbbbb;border-bottom:1px solid #bbbbbb;"></div>
<div class="c d" style="left:558px;top:584px;width:43px;height:28px;background:#fdf9f6;border-right:1px solid #bbbbbb;border-bottom:1px solid #bbbbbb;"></div>
<div class="c d" style="left:601px;top:584px;width:58px;height:28px;background:#eef8fc;border-right:1px solid #bbbbbb;border-bottom:1px solid #bbbbbb;">1.60</div>
<div class="c d" style="left:659px;top:584px;width:60px;height:28px;background:#eef8fc;border-right:1px solid #bbbbbb;border-bottom:1px solid #bbbbbb;">3.69</div>
<div class="c d" style="left:719px;top:584px;width:60px;height:28px;background:#eef8fc;border-right:1px solid #bbbbbb;border-bottom:1px solid #bbbbbb;">5.38</div>
<div class="c" style="left:779px;top:584px;width:37px;height:28px;background:#ffffff;border-right:1px solid #bbbbbb;border-bottom:1px solid #bbbbbb;"><span style="color:#ff0000">勝</span></div>
<div class="c" style="left:816px;top:584px;width:37px;height:28px;background:#ffffff;border-right:1px solid #bbbbbb;border-bottom:1px solid #bbbbbb;"><span style="color:#333333"></span></div>
<div class="c" style="left:853px;top:584px;width:53px;height:28px;background:#ffffff;border-bottom:1px solid #bbbbbb;"><span style="color:#333333"></span></div>
<div class="c ty" style="left:0px;top:612px;width:68px;height:28px;background:#cc00cc;border-right:1px solid #bbbbbb;border-bottom:1px solid #bbbbbb;">德乙</div>
<div class="c d" style="left:68px;top:612px;width:72px;height:28px;background:#f0f0f0;border-right:1px solid #bbbbbb;border-bottom:1px solid #bbbbbb;">25-11-09</div>
<div class="c" style="left:140px;top:612px;width:102px;height:28px;background:#f0f0f0;border-right:1px solid #bbbbbb;border-bottom:1px solid #bbbbbb;"><span style="color:#008000">荷尔斯泰因</span></div>
<div class="c d" style="left:242px;top:612px;width:83px;height:28px;background:#f0f0f0;border-right:1px solid #bbbbbb;border-bottom:1px solid #bbbbbb;"><span style="color:#ff0000">1-0</span>(0-0)</div>
<div class="c d" style="left:325px;top:612px;width:37px;height:28px;background:#f0f0f0;border-right:1px solid #bbbbbb;border-bottom:1px solid #bbbbbb;">3-5</div>
<div class="c" style="left:362px;top:612px;width:96px;height:28px;background:#f0f0f0;border-right:1px solid #bbbbbb;border-bottom:1px solid #bbbbbb;"><span style="color:#000">杜塞尔多夫</span></div>
<div class="c d" style="left:458px;top:612px;width:42px;height:28px;background:#fdf9f6;border-right:1px solid #bbbbbb;border-bottom:1px solid #bbbbbb;">0.93</div>
<div class="c d" style="left:500px;top:612px;width:58px;height:28px;background:#fdf9f6;border-right:1px solid #bbbbbb;border-bottom:1px solid #bbbbbb;">半/一</div>
<div class="c d" style="left:558px;top:612px;width:43px;height:28px;background:#fdf9f6;border-right:1px solid #bbbbbb;border-bottom:1px solid #bbbbbb;">0.95</div>
<div class="c d" style="left:601px;top:612px;width:58px;height:28px;background:#eef8fc;border-right:1px solid #bbbbbb;border-bottom:1px solid #bbbbbb;">1.78</div>
<div class="c d" style="left:659px;top:612px;width:60px;height:28px;background:#eef8fc;border-right:1px solid #bbbbbb;border-bottom:1px solid #bbbbbb;">3.83</div>
<div class="c d" style="left:719px;top:612px;width:60px;height:28px;background:#eef8fc;border-right:1px solid #bbbbbb;border-bottom:1px solid #bbbbbb;">4.05</div>
<div class="c" style="left:779px;top:612px;width:37px;height:28px;background:#f0f0f0;border-right:1px solid #bbbbbb;border-bottom:1px solid #bbbbbb;"><span style="color:#ff0000">勝</span></div>
<div class="c" style="left:816px;top:612px;width:37px;height:28px;background:#f0f0f0;border-right:1px solid #bbbbbb;border-bottom:1px solid #bbbbbb;"><span style="color:#ff0000">贏</span></div>
<div class="c" style="left:853px;top:612px;width:53px;height:28px;background:#f0f0f0;border-bottom:1px solid #bbbbbb;"><span style="color:#008000">小</span></div>
<div class="c ty" style="left:0px;top:640px;width:68px;height:28px;background:#cc00cc;border-right:1px solid #bbbbbb;border-bottom:1px solid #bbbbbb;">德乙</div>
<div class="c d" style="left:68px;top:640px;width:72px;height:28px;background:#ffffff;border-right:1px solid #bbbbbb;border-bottom:1px solid #bbbbbb;">25-11-01</div>
<div class="c" style="left:140px;top:640px;width:102px;height:28px;background:#ffffff;border-right:1px solid #bbbbbb;border-bottom:1px solid #bbbbbb;"><span style="color:#000">普鲁士明斯特</span></div>
<div class="c d" style="left:242px;top:640px;width:83px;height:28px;background:#ffffff;border-right:1px solid #bbbbbb;border-bottom:1px solid #bbbbbb;"><span style="color:#ff0000">2-1</span>(0-1)</div>
<div class="c d" style="left:325px;top:640px;width:37px;height:28px;background:#ffffff;border-right:1px solid #bbbbbb;border-bottom:1px solid #bbbbbb;">4-7</div>
<div class="c" style="left:362px;top:640px;width:96px;height:28px;background:#ffffff;border-right:1px solid #bbbbbb;border-bottom:1px solid #bbbbbb;"><span style="color:#008000">荷尔斯泰因</span></div>
<div class="c d" style="left:458px;top:640px;width:42px;height:28px;background:#fdf9f6;border-right:1px solid #bbbbbb;border-bottom:1px solid #bbbbbb;">0.96</div>
<div class="c d" style="left:500px;top:640px;width:58px;height:28px;background:#fdf9f6;border-right:1px solid #bbbbbb;border-bottom:1px solid #bbbbbb;"><span style="color:#f00">*</span>平/半</div>
<div class="c d" style="left:558px;top:640px;width:43px;height:28px;background:#fdf9f6;border-right:1px solid #bbbbbb;border-bottom:1px solid #bbbbbb;">0.92</div>
<div class="c d" style="left:601px;top:640px;width:58px;height:28px;background:#eef8fc;border-right:1px solid #bbbbbb;border-bottom:1px solid #bbbbbb;">3.24</div>
<div class="c d" style="left:659px;top:640px;width:60px;height:28px;background:#eef8fc;border-right:1px solid #bbbbbb;border-bottom:1px solid #bbbbbb;">3.49</div>
<div class="c d" style="left:719px;top:640px;width:60px;height:28px;background:#eef8fc;border-right:1px solid #bbbbbb;border-bottom:1px solid #bbbbbb;">2.10</div>
<div class="c" style="left:779px;top:640px;width:37px;height:28px;background:#ffffff;border-right:1px solid #bbbbbb;border-bottom:1px solid #bbbbbb;"><span style="color:#008000">負</span></div>
<div class="c" style="left:816px;top:640px;width:37px;height:28px;background:#ffffff;border-right:1px solid #bbbbbb;border-bottom:1px solid #bbbbbb;"><span style="color:#008000">輸</span></div>
<div class="c" style="left:853px;top:640px;width:53px;height:28px;background:#ffffff;border-bottom:1px solid #bbbbbb;"><span style="color:#ff0000">大</span></div>
<div class="c ty" style="left:0px;top:668px;width:68px;height:28px;background:#a10900;border-right:1px solid #bbbbbb;border-bottom:1px solid #bbbbbb;">德国杯</div>
<div class="c d" style="left:68px;top:668px;width:72px;height:28px;background:#f0f0f0;border-right:1px solid #bbbbbb;border-bottom:1px solid #bbbbbb;">25-10-29</div>
<div class="c" style="left:140px;top:668px;width:102px;height:28px;background:#f0f0f0;border-right:1px solid #bbbbbb;border-bottom:1px solid #bbbbbb;"><b class="rc">1</b><span style="color:#000">沃尔夫斯堡</span></div>
<div class="c d" style="left:242px;top:668px;width:83px;height:28px;background:#f0f0f0;border-right:1px solid #bbbbbb;border-bottom:1px solid #bbbbbb;"><span style="color:#ff0000">0-1</span>(0-1)</div>
<div class="c d" style="left:325px;top:668px;width:37px;height:28px;background:#f0f0f0;border-right:1px solid #bbbbbb;border-bottom:1px solid #bbbbbb;">5-4</div>
<div class="c" style="left:362px;top:668px;width:96px;height:28px;background:#f0f0f0;border-right:1px solid #bbbbbb;border-bottom:1px solid #bbbbbb;"><span style="color:#008000">荷尔斯泰因</span></div>
<div class="c d" style="left:458px;top:668px;width:42px;height:28px;background:#fdf9f6;border-right:1px solid #bbbbbb;border-bottom:1px solid #bbbbbb;">0.97</div>
<div class="c d" style="left:500px;top:668px;width:58px;height:28px;background:#fdf9f6;border-right:1px solid #bbbbbb;border-bottom:1px solid #bbbbbb;">半/一</div>
<div class="c d" style="left:558px;top:668px;width:43px;height:28px;background:#fdf9f6;border-right:1px solid #bbbbbb;border-bottom:1px solid #bbbbbb;">0.91</div>
<div class="c d" style="left:601px;top:668px;width:58px;height:28px;background:#eef8fc;border-right:1px solid #bbbbbb;border-bottom:1px solid #bbbbbb;">1.71</div>
<div class="c d" style="left:659px;top:668px;width:60px;height:28px;background:#eef8fc;border-right:1px solid #bbbbbb;border-bottom:1px solid #bbbbbb;">3.89</div>
<div class="c d" style="left:719px;top:668px;width:60px;height:28px;background:#eef8fc;border-right:1px solid #bbbbbb;border-bottom:1px solid #bbbbbb;">4.46</div>
<div class="c" style="left:779px;top:668px;width:37px;height:28px;background:#f0f0f0;border-right:1px solid #bbbbbb;border-bottom:1px solid #bbbbbb;"><span style="color:#ff0000">勝</span></div>
<div class="c" style="left:816px;top:668px;width:37px;height:28px;background:#f0f0f0;border-right:1px solid #bbbbbb;border-bottom:1px solid #bbbbbb;"><span style="color:#ff0000">贏</span></div>
<div class="c" style="left:853px;top:668px;width:53px;height:28px;background:#f0f0f0;border-bottom:1px solid #bbbbbb;"><span style="color:#008000">小</span></div>
<div class="c ty" style="left:0px;top:696px;width:68px;height:28px;background:#cc00cc;border-right:1px solid #bbbbbb;border-bottom:1px solid #bbbbbb;">德乙</div>
<div class="c d" style="left:68px;top:696px;width:72px;height:28px;background:#ffffff;border-right:1px solid #bbbbbb;border-bottom:1px solid #bbbbbb;">25-10-25</div>
<div class="c" style="left:140px;top:696px;width:102px;height:28px;background:#ffffff;border-right:1px solid #bbbbbb;border-bottom:1px solid #bbbbbb;"><span style="color:#008000">荷尔斯泰因</span></div>
<div class="c d" style="left:242px;top:696px;width:83px;height:28px;background:#ffffff;border-right:1px solid #bbbbbb;border-bottom:1px solid #bbbbbb;"><span style="color:#ff0000">1-1</span>(0-0)</div>
<div class="c d" style="left:325px;top:696px;width:37px;height:28px;background:#ffffff;border-right:1px solid #bbbbbb;border-bottom:1px solid #bbbbbb;">9-7</div>
<div class="c" style="left:362px;top:696px;width:96px;height:28px;background:#ffffff;border-right:1px solid #bbbbbb;border-bottom:1px solid #bbbbbb;"><span style="color:#000">波鸿</span></div>
<div class="c d" style="left:458px;top:696px;width:42px;height:28px;background:#fdf9f6;border-right:1px solid #bbbbbb;border-bottom:1px solid #bbbbbb;">0.90</div>
<div class="c d" style="left:500px;top:696px;width:58px;height:28px;background:#fdf9f6;border-right:1px solid #bbbbbb;border-bottom:1px solid #bbbbbb;">半球</div>
<div class="c d" style="left:558px;top:696px;width:43px;height:28px;background:#fdf9f6;border-right:1px solid #bbbbbb;border-bottom:1px solid #bbbbbb;">0.98</div>
<div class="c d" style="left:601px;top:696px;width:58px;height:28px;background:#eef8fc;border-right:1px solid #bbbbbb;border-bottom:1px solid #bbbbbb;">1.88</div>
<div class="c d" style="left:659px;top:696px;width:60px;height:28px;background:#eef8fc;border-right:1px solid #bbbbbb;border-bottom:1px solid #bbbbbb;">3.87</div>
<div class="c d" style="left:719px;top:696px;width:60px;height:28px;background:#eef8fc;border-right:1px solid #bbbbbb;border-bottom:1px solid #bbbbbb;">3.56</div>
<div class="c" style="left:779px;top:696px;width:37px;height:28px;background:#ffffff;border-right:1px solid #bbbbbb;border-bottom:1px solid #bbbbbb;"><span style="color:#0000ff">平</span></div>
<div class="c" style="left:816px;top:696px;width:37px;height:28px;background:#ffffff;border-right:1px solid #bbbbbb;border-bottom:1px solid #bbbbbb;"><span style="color:#008000">輸</span></div>
<div class="c" style="left:853px;top:696px;width:53px;height:28px;background:#ffffff;border-bottom:1px solid #bbbbbb;"><span style="color:#008000">小</span></div>
<div class="c ty" style="left:0px;top:724px;width:68px;height:28px;background:#cc00cc;border-right:1px solid #bbbbbb;border-bottom:1px solid #bbbbbb;">德乙</div>
<div class="c d" style="left:68px;top:724px;width:72px;height:28px;background:#f0f0f0;border-right:1px solid #bbbbbb;border-bottom:1px solid #bbbbbb;">25-10-19</div>
<div class="c" style="left:140px;top:724px;width:102px;height:28px;background:#f0f0f0;border-right:1px solid #bbbbbb;border-bottom:1px solid #bbbbbb;"><span style="color:#000">纽伦堡</span></div>
<div class="c d" style="left:242px;top:724px;width:83px;height:28px;background:#f0f0f0;border-right:1px solid #bbbbbb;border-bottom:1px solid #bbbbbb;"><span style="color:#ff0000">1-1</span>(1-0)</div>
<div class="c d" style="left:325px;top:724px;width:37px;height:28px;background:#f0f0f0;border-right:1px solid #bbbbbb;border-bottom:1px solid #bbbbbb;">3-7</div>
<div class="c" style="left:362px;top:724px;width:96px;height:28px;background:#f0f0f0;border-right:1px solid #bbbbbb;border-bottom:1px solid #bbbbbb;"><span style="color:#008000">荷尔斯泰因</span></div>
<div class="c d" style="left:458px;top:724px;width:42px;height:28px;background:#fdf9f6;border-right:1px solid #bbbbbb;border-bottom:1px solid #bbbbbb;">0.87</div>
<div class="c d" style="left:500px;top:724px;width:58px;height:28px;background:#fdf9f6;border-right:1px solid #bbbbbb;border-bottom:1px solid #bbbbbb;">平手</div>
<div class="c d" style="left:558px;top:724px;width:43px;height:28px;background:#fdf9f6;border-right:1px solid #bbbbbb;border-bottom:1px solid #bbbbbb;">1.01</div>
<div class="c d" style="left:601px;top:724px;width:58px;height:28px;background:#eef8fc;border-right:1px solid #bbbbbb;border-bottom:1px solid #bbbbbb;">2.49</div>
<div class="c d" style="left:659px;top:724px;width:60px;height:28px;background:#eef8fc;border-right:1px solid #bbbbbb;border-bottom:1px solid #bbbbbb;">3.41</div>
<div class="c d" style="left:719px;top:724px;width:60px;height:28px;background:#eef8fc;border-right:1px solid #bbbbbb;border-bottom:1px solid #bbbbbb;">2.65</div>
<div class="c" style="left:779px;top:724px;width:37px;height:28px;background:#f0f0f0;border-right:1px solid #bbbbbb;border-bottom:1px solid #bbbbbb;"><span style="color:#0000ff">平</span></div>
<div class="c" style="left:816px;top:724px;width:37px;height:28px;background:#f0f0f0;border-right:1px solid #bbbbbb;border-bottom:1px solid #bbbbbb;"><span style="color:#0000ff">走</span></div>
<div class="c" style="left:853px;top:724px;width:53px;height:28px;background:#f0f0f0;border-bottom:1px solid #bbbbbb;"><span style="color:#008000">小</span></div>
</body></html>
